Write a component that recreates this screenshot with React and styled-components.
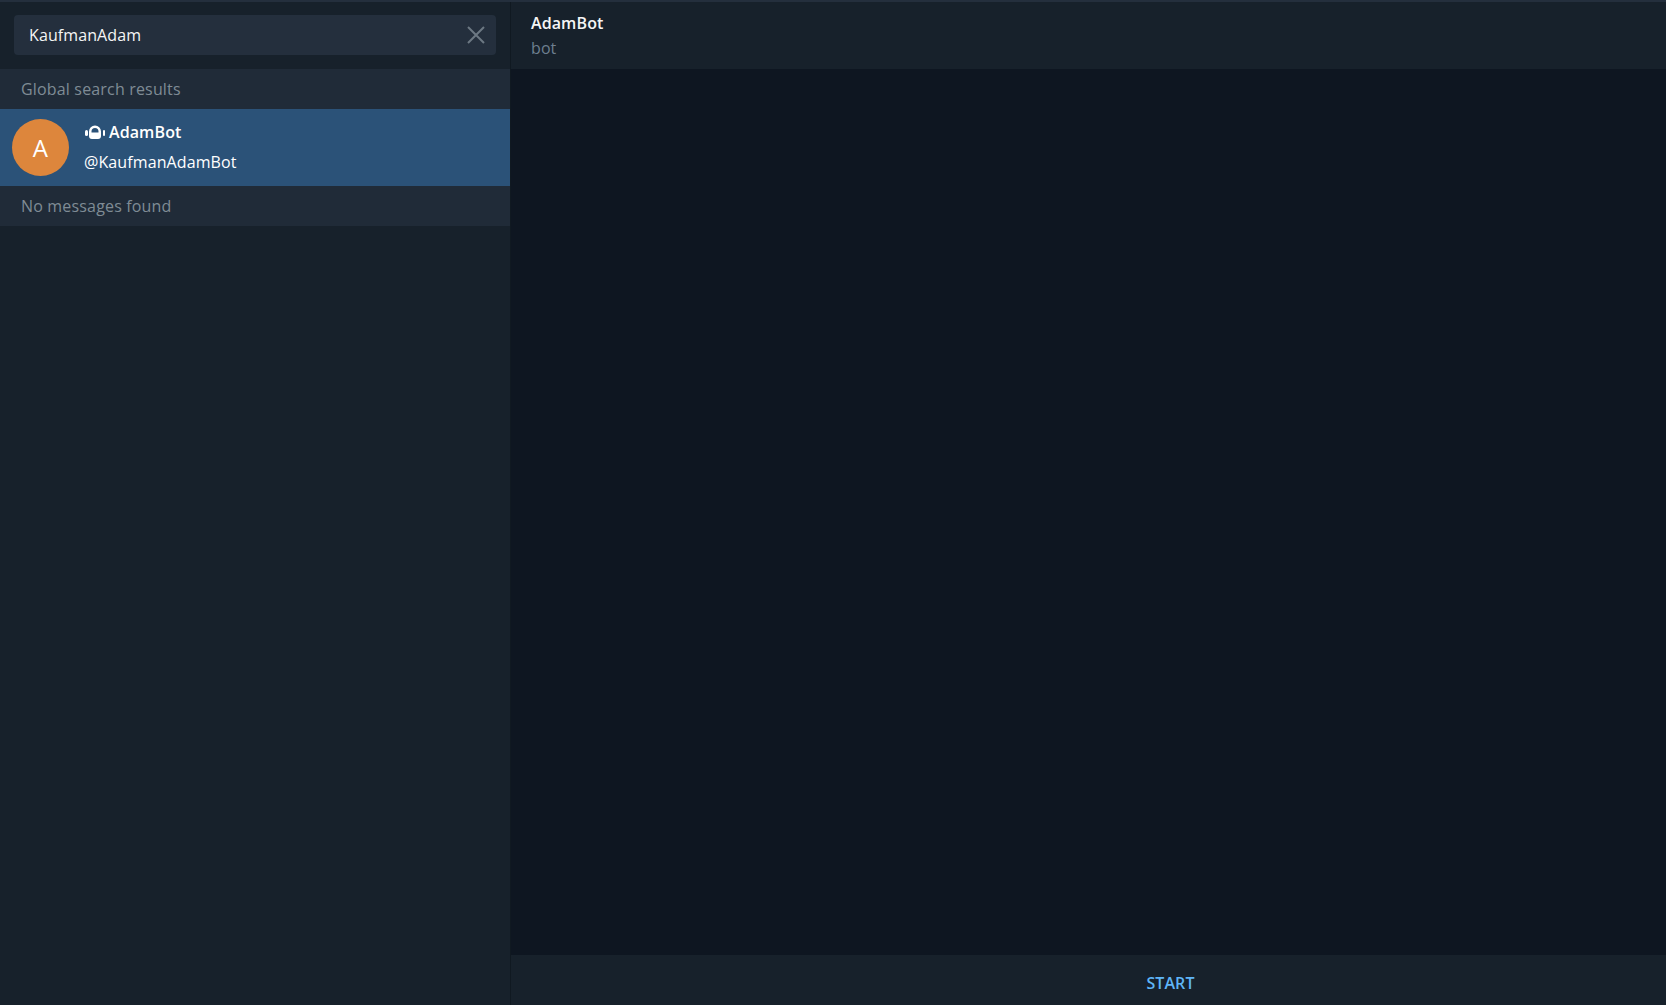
import React from 'react';
import styled, { createGlobalStyle } from 'styled-components';

const GlobalStyle = createGlobalStyle`
  html, body { margin: 0; padding: 0; height: 100%; background: #0e1621; }
  #root { height: 100%; }
  * { box-sizing: border-box; }
  body {
    font-family: "Open Sans", "Liberation Sans", sans-serif;
    font-size: 16px;
    letter-spacing: 0.1px;
    overflow: hidden;
  }
`;

const Shell = styled.div`
  display: flex;
  flex-direction: column;
  height: 1005px;
  border-top: 2px solid #242f3d;
`;

const Columns = styled.div`
  display: flex;
  flex: 1;
  min-height: 0;
`;

const Sidebar = styled.aside`
  width: 511px;
  flex: none;
  background: #17212b;
  border-right: 1px solid #101921;
`;

const SearchBar = styled.div`
  height: 67px;
  padding: 13px 14px 14px;
`;

const SearchField = styled.div`
  display: flex;
  align-items: center;
  justify-content: space-between;
  height: 40px;
  padding: 0 11px 0 15px;
  background: #242f3d;
  border-radius: 4px;
  color: #f5f5f5;
`;

const SectionLabel = styled.div`
  height: 40px;
  padding-left: 21px;
  line-height: 40px;
  letter-spacing: 0.17px;
  background: #202b38;
  color: #7f8b95;
`;

const ResultRow = styled.div`
  display: flex;
  align-items: center;
  gap: 15px;
  height: 77px;
  padding: 0 12px 2px;
  background: #2b5278;
`;

const Avatar = styled.div`
  display: flex;
  align-items: center;
  justify-content: center;
  width: 57px;
  height: 57px;
  flex: none;
  margin-top: 2px;
  border-radius: 50%;
  background: #dd863c;
  color: #fff;
  font-size: 24px;
  font-weight: 500;
`;

const ResultText = styled.div`
  display: flex;
  flex-direction: column;
  gap: 8px;
  color: #fff;
`;

const ResultName = styled.div`
  display: flex;
  align-items: center;
  gap: 4px;
  padding-left: 1px;
  font-weight: 600;
  line-height: 22px;
`;

const ResultHandle = styled.div`
  line-height: 22px;
`;

const Chat = styled.main`
  flex: 1;
  display: flex;
  flex-direction: column;
  background: #0e1621;
`;

const ChatHeader = styled.header`
  height: 67px;
  padding: 10px 20px 0;
  background: #17212b;
`;

const ChatTitle = styled.div`
  font-weight: 600;
  line-height: 22px;
  color: #f5f5f5;
`;

const ChatStatus = styled.div`
  margin-top: 3px;
  line-height: 22px;
  color: #6d7f8f;
`;

const ChatBody = styled.div`
  flex: 1;
`;

const StartBar = styled.div`
  height: 50px;
  display: flex;
  align-items: center;
  justify-content: center;
  padding: 6px 0 0 164px;
  background: #17212b;
  color: #5eb5f7;
  font-weight: 600;
`;

const BotIcon = () => (
  <svg width="20" height="14" viewBox="0 0 20 14" fill="#fff">
    <rect x="0" y="5" width="3" height="6" rx="1.5" />
    <rect x="18" y="5" width="2" height="6" rx="1" />
    <path
      fillRule="evenodd"
      d="M4 6.5a6 6 0 0 1 12 0V11a3 3 0 0 1-3 3H7a3 3 0 0 1-3-3V6.5zM6.5 7.5h7V6.5a3.5 3.5 0 0 0-7 0v1z"
    />
  </svg>
);

const CloseIcon = () => (
  <svg width="18" height="18" viewBox="0 0 18 18" stroke="#6c7883" strokeWidth="2" fill="none">
    <path d="M1 1l16 16M17 1L1 17" />
  </svg>
);

export default function App() {
  return (
    <Shell>
      <GlobalStyle />
      <Columns>
        <Sidebar>
          <SearchBar>
            <SearchField>
              KaufmanAdam
              <CloseIcon />
            </SearchField>
          </SearchBar>
          <SectionLabel>Global search results</SectionLabel>
          <ResultRow>
            <Avatar>A</Avatar>
            <ResultText>
              <ResultName>
                <BotIcon />
                AdamBot
              </ResultName>
              <ResultHandle>@KaufmanAdamBot</ResultHandle>
            </ResultText>
          </ResultRow>
          <SectionLabel>No messages found</SectionLabel>
        </Sidebar>
        <Chat>
          <ChatHeader>
            <ChatTitle>AdamBot</ChatTitle>
            <ChatStatus>bot</ChatStatus>
          </ChatHeader>
          <ChatBody />
          <StartBar>START</StartBar>
        </Chat>
      </Columns>
    </Shell>
  );
}
